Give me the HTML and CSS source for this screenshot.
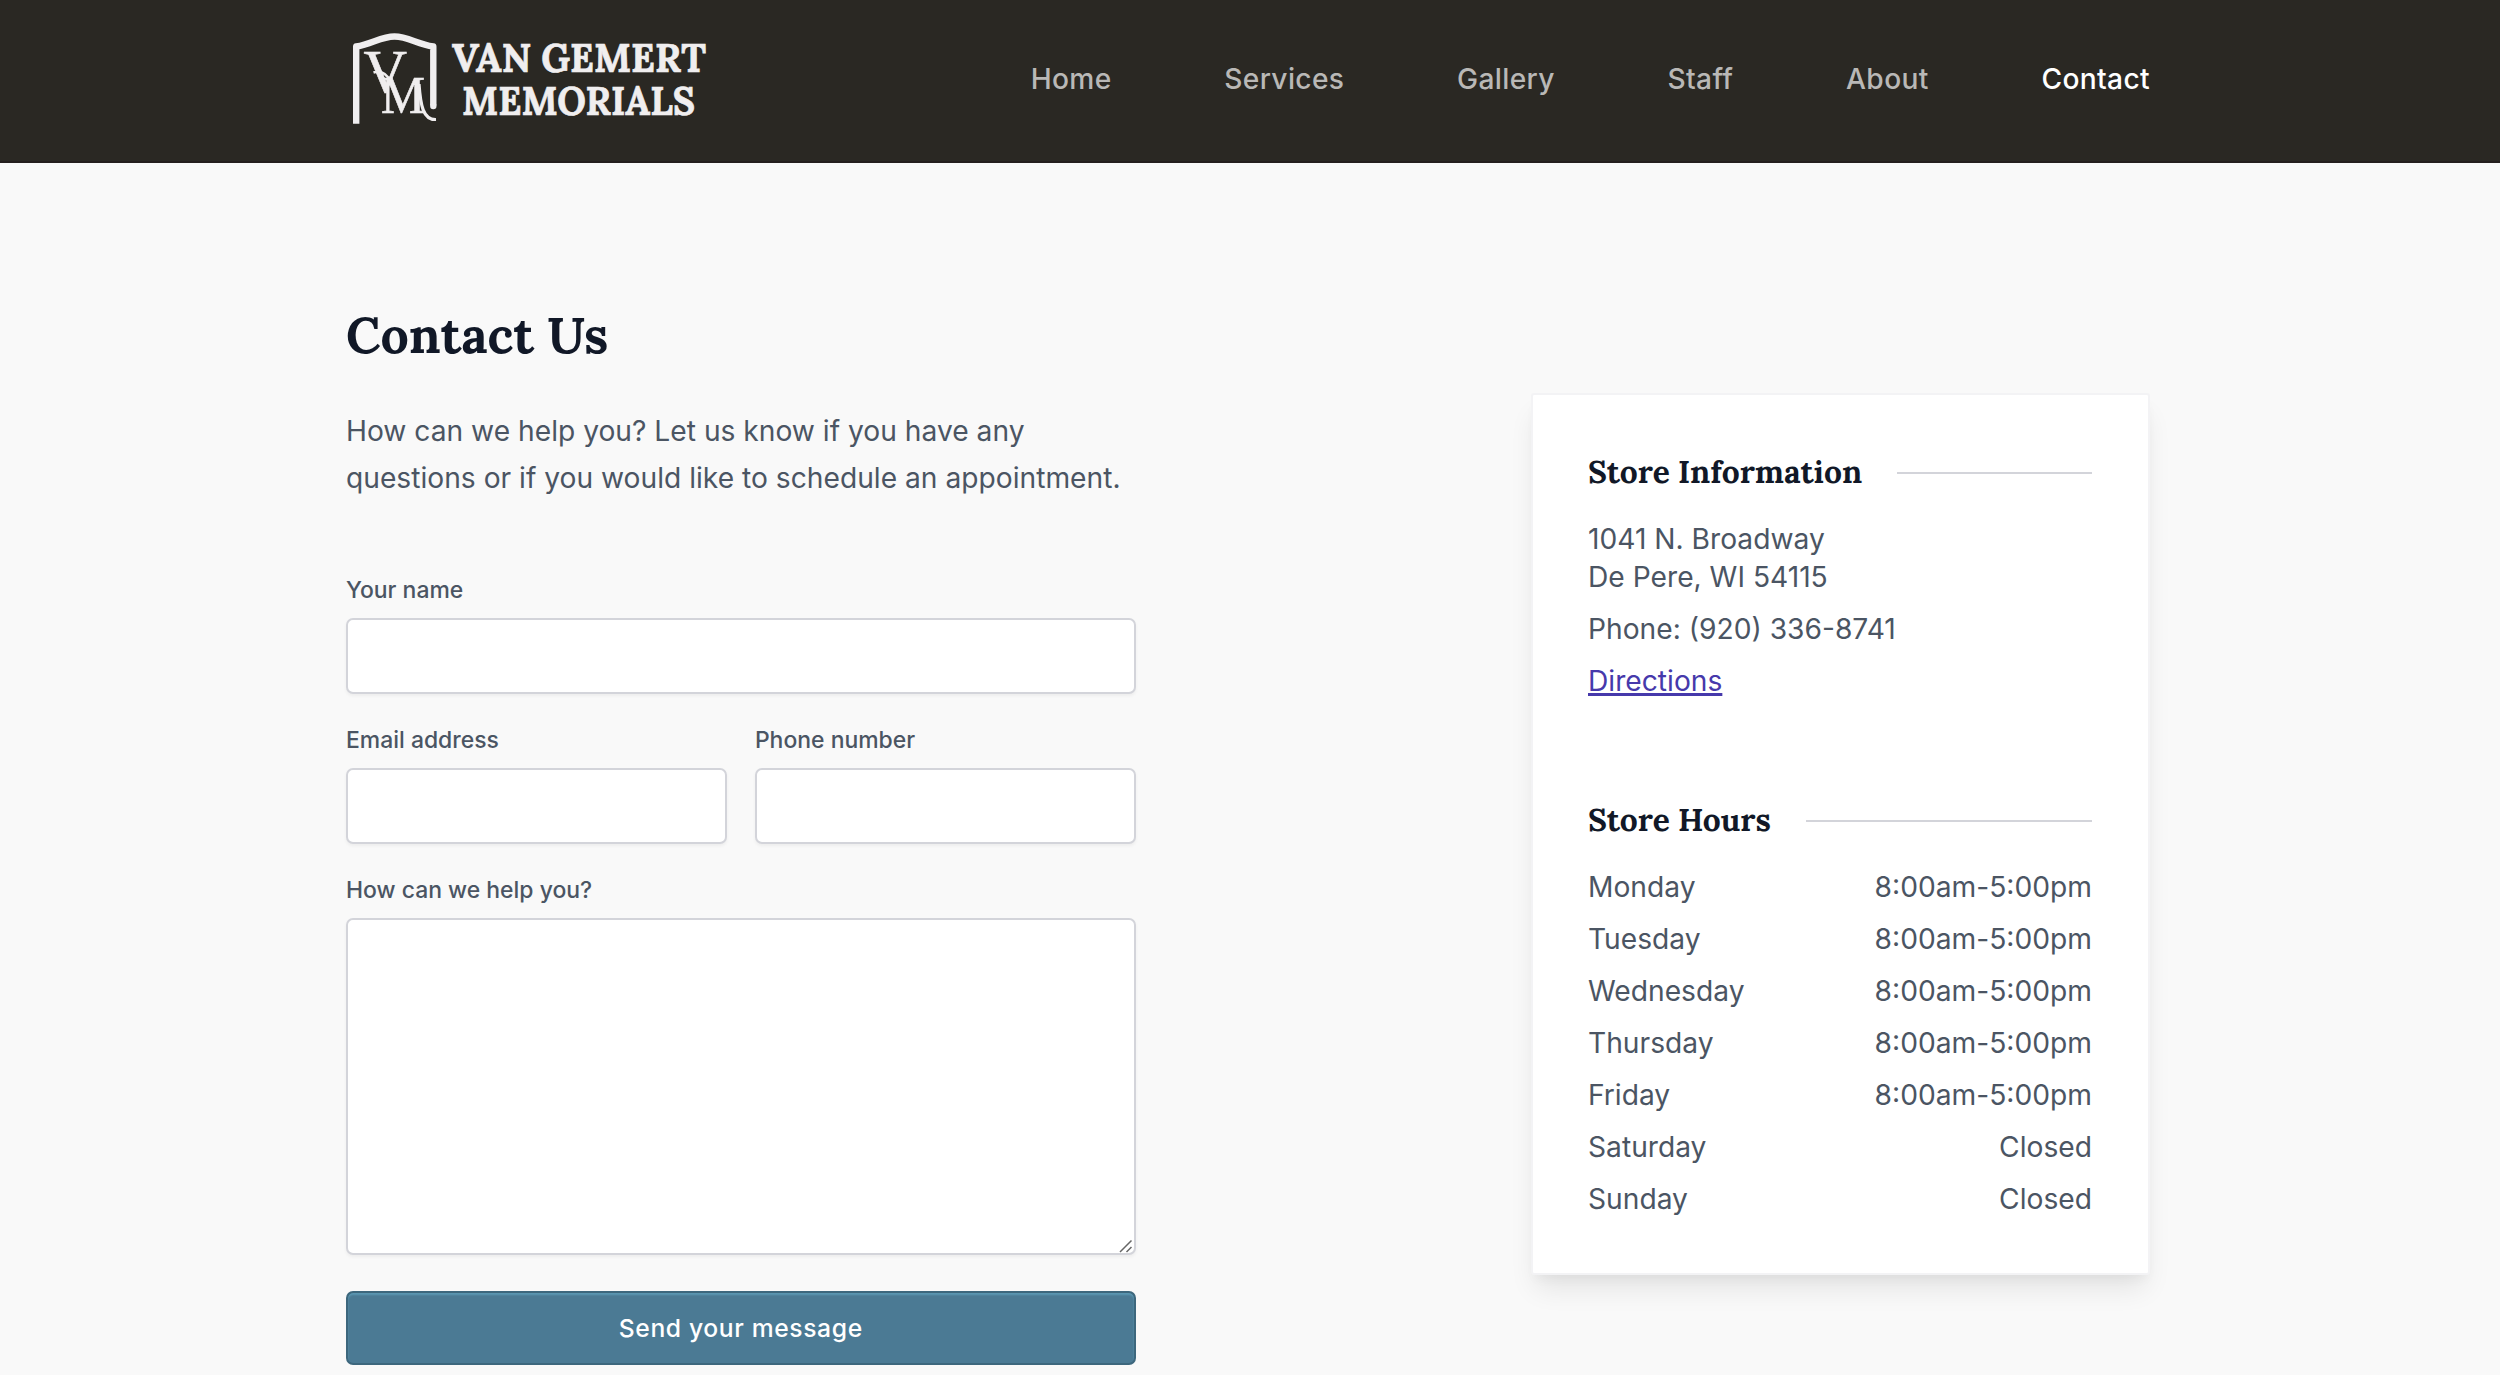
FILE: index.html
```html
<!DOCTYPE html>
<html lang="en">
<head>
<meta charset="utf-8">
<title>Contact Us | Van Gemert Memorials</title>
<link rel="stylesheet" href="styles.css">
</head>
<body>
<header class="header">
  <div class="container header-inner">
    <a class="logo" href="#" aria-label="Van Gemert Memorials">
      <svg width="400" height="110" viewBox="346 24 400 110">
        <path class="arch" d="M356.200 123.800 V46.500 C372 44 381 36.500 394.500 36.500 C408 36.500 417 44 433.300 46.500 V105.500"/>
        <circle class="fill" cx="433.300" cy="106" r="3.200"/>
        <text class="mono" x="363.500" y="91.500" font-size="62" textLength="43.500" lengthAdjust="spacingAndGlyphs">V</text>
        <text class="mono" x="381" y="112.500" font-size="52" textLength="44" lengthAdjust="spacingAndGlyphs">M</text>
        <path class="swash" d="M373.500 72.500 C381 70 387 74 391 82"/>
        <path class="tail" d="M419 84 C420.500 105 423 120 436 119.500"/>
        <text class="word" x="452" y="71.500" textLength="254" lengthAdjust="spacingAndGlyphs">VAN GEMERT</text>
        <text class="word" x="462" y="114.700" textLength="233" lengthAdjust="spacingAndGlyphs">MEMORIALS</text>
      </svg>
    </a>
    <nav class="nav">
      <a href="#">Home</a><a href="#">Services</a><a href="#">Gallery</a><a href="#">Staff</a><a href="#">About</a><a class="active" href="#">Contact</a>
    </nav>
  </div>
</header>
<main class="container main">
  <section class="contact">
    <h1>Contact Us</h1>
    <p class="intro">How can we help you? Let us know if you have any questions or if you would like to schedule an appointment.</p>
    <form class="form">
      <label class="field">Your name<input type="text"></label>
      <div class="pair">
        <label class="field">Email address<input type="email"></label>
        <label class="field">Phone number<input type="tel"></label>
      </div>
      <label class="field">How can we help you?
        <span class="area"><textarea></textarea>
          <svg class="grip" width="14" height="14" viewBox="0 0 14 14"><path d="M1 13 L12.500 1.500 M7.500 13 L12.500 8"/></svg>
        </span>
      </label>
      <button class="send" type="button">Send your message</button>
    </form>
  </section>
  <aside class="card">
    <h2>Store Information</h2>
    <div class="info">
      <p>1041 N. Broadway<br>De Pere, WI 54115</p>
      <p>Phone: (920) 336-8741</p>
      <p><a class="link" href="#">Directions</a></p>
    </div>
    <h2>Store Hours</h2>
    <dl class="hours">
      <div><dt>Monday</dt><dd>8:00am-5:00pm</dd></div>
      <div><dt>Tuesday</dt><dd>8:00am-5:00pm</dd></div>
      <div><dt>Wednesday</dt><dd>8:00am-5:00pm</dd></div>
      <div><dt>Thursday</dt><dd>8:00am-5:00pm</dd></div>
      <div><dt>Friday</dt><dd>8:00am-5:00pm</dd></div>
      <div><dt>Saturday</dt><dd>Closed</dd></div>
      <div><dt>Sunday</dt><dd>Closed</dd></div>
    </dl>
  </aside>
</main>
</body>
</html>
```
FILE: styles.css
```css
* { box-sizing: border-box; margin: 0; padding: 0; }
html { overflow: hidden; }
body {
  height: 1375px;
  overflow: hidden;
  background: #f9f9f9;
  color: #4b5563;
  font: 400 28.2px/38px Inter, sans-serif;
}
.container { width: 1804px; margin-left: 346px; }

.header { height: 163px; background: #2a2823; border-bottom: 2px solid #241f1e; }
.header-inner { display: flex; justify-content: space-between; align-items: flex-start; }
.logo { display: block; height: 110px; margin-top: 24px; }
.logo svg { display: block; overflow: visible; }
.arch { fill: none; stroke: #f0eeef; stroke-width: 6.4; stroke-linejoin: round; }
.fill { fill: #f0eeef; }
.mono { fill: #f0eeef; stroke: #f0eeef; stroke-width: .6; font-family: "Liberation Serif", serif; }
.swash { fill: none; stroke: #f0eeef; stroke-width: 2.6; }
.tail { fill: none; stroke: #f0eeef; stroke-width: 3.2; }
.word { fill: #f0eeef; stroke: #f0eeef; stroke-width: .7; font: 700 40px Lora, serif; }
.nav { display: flex; gap: 112.7px; margin-top: 60px; font-size: 28.17px; letter-spacing: .35px; font-weight: 500; }
.nav a { color: #b9b8b6; text-decoration: none; }
.nav a.active { color: #fff; }

.main { display: flex; justify-content: space-between; align-items: flex-start; }
.contact { width: 789.5px; padding-top: 142.4px; }
h1, h2 { font-family: Lora, serif; font-weight: 700; color: #111827; }
h1 { font-size: 50.1px; line-height: 60px; }
.intro { margin-top: 43px; line-height: 47px; }
.form { margin-top: 70.8px; display: flex; flex-direction: column; gap: 29.2px; }
.pair { display: grid; grid-template-columns: 1fr 1fr; gap: 28.3px; }
.field { display: block; font-size: 22.95px; line-height: 34px; font-weight: 500; }
input, textarea {
  display: block;
  width: 100%;
  height: 75.4px;
  margin-top: 11.2px;
  background: #fff;
  border: 2px solid #d3d4da;
  border-radius: 7px;
  box-shadow: 0 2px 3.5px rgba(0, 0, 0, .05);
  outline: 0;
}
.area { display: block; position: relative; margin-bottom: 6.2px; }
textarea { height: 337.5px; resize: none; }
.grip { position: absolute; right: 3px; bottom: 2px; fill: none; stroke: #666; stroke-width: 1.5; }
.send {
  height: 74px;
  border: 2px solid #3d677d;
  border-radius: 7px;
  background: #4b7a94;
  box-shadow: inset 0 2px 2px #5b97b2;
  color: #fff;
  font: 500 24.65px Inter, sans-serif;
  letter-spacing: .64px;
}

.card {
  width: 618.5px;
  height: 882px;
  margin: 230.3px .5px 0 0;
  padding: 56.4px 55.5px 0 55px;
  background: #fff;
  border: 2px solid #f3f3f5;
  border-radius: 3px;
  background-clip: padding-box;
  box-shadow: 0 17.6px 26px -5px rgba(0, 0, 0, .09), 0 7px 10.5px -3.5px rgba(0, 0, 0, .04);
}
h2 { display: flex; align-items: center; gap: 35.2px; font-size: 31.69px; line-height: 40px; white-space: nowrap; }
h2::after { content: ""; flex: 1; height: 2px; margin-top: 2px; background: #d3d4da; }
.info { display: flex; flex-direction: column; gap: 14px; margin: 28.3px 0 100.3px; }
.link { color: #4639ab; text-decoration: underline; text-decoration-thickness: 2.5px; }
.hours { display: flex; flex-direction: column; gap: 14.08px; margin-top: 27.6px; }
.hours div { display: flex; justify-content: space-between; }
```
